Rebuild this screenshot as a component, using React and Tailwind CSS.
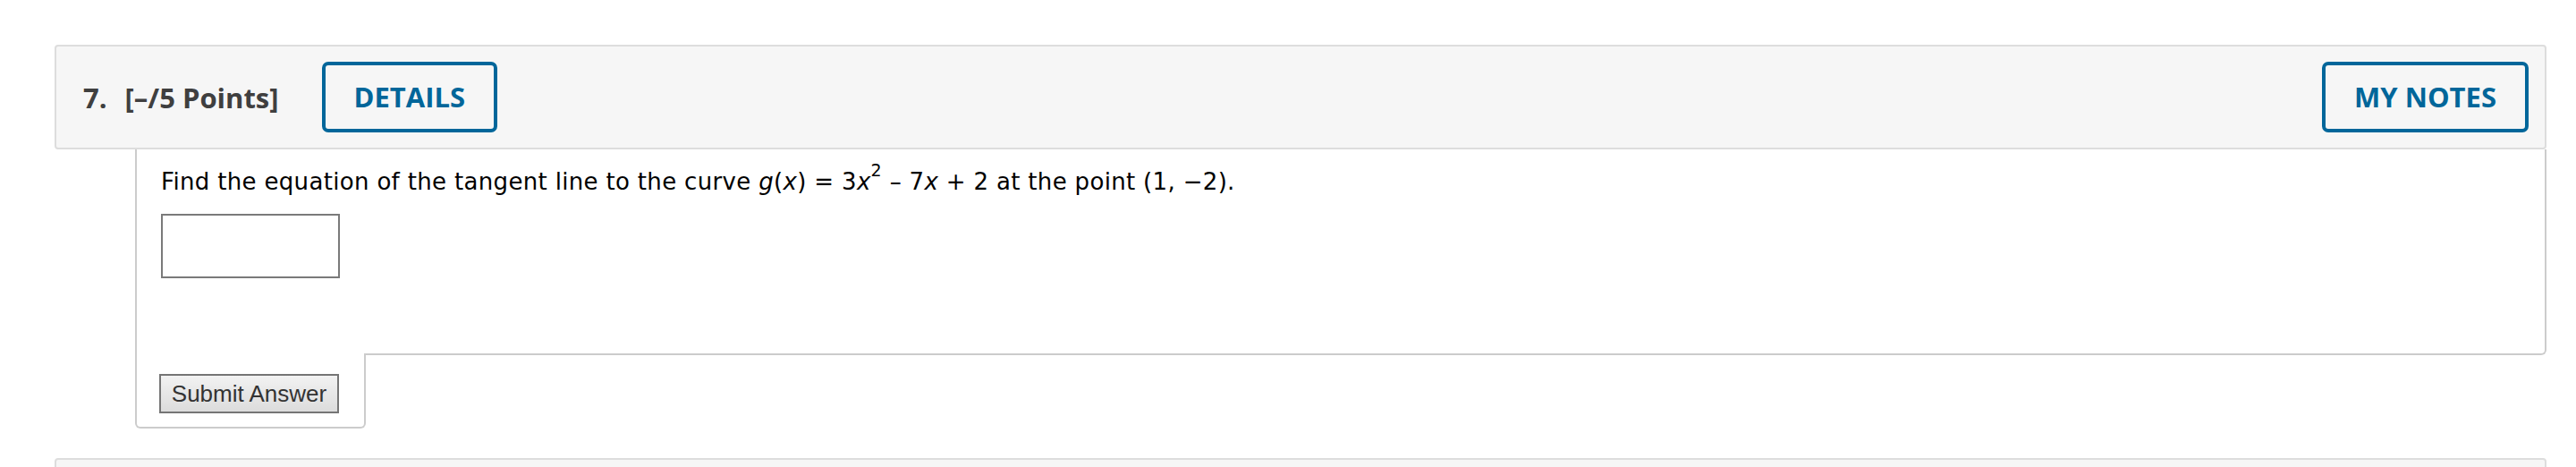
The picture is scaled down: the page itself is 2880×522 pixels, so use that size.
export default function App() {
  return (
    <div className="min-h-screen bg-white pt-[50px] pl-[61px] pr-[33px]">
      <div className="flex h-[117px] items-center justify-between rounded-[4px] border-2 border-[#dddddd] bg-[#f6f6f6] pl-[30px] pr-[18px] font-['Open_Sans',sans-serif]">
        <div className="flex items-center">
          <span className="text-[31px] font-bold leading-[40px] text-[#3f3f3f]">7.</span>
          <span className="ml-[20px] text-[31px] font-bold leading-[40px] text-[#3f3f3f]">[–/5 Points]</span>
          <button className="ml-[48px] flex h-[79px] items-center rounded-[7px] border-4 border-[#00669a] px-[32px] text-[31px] font-bold text-[#00669a]">
            DETAILS
          </button>
        </div>
        <button className="flex h-[79px] items-center rounded-[7px] border-4 border-[#00669a] px-[32px] text-[31px] font-bold text-[#00669a]">
          MY NOTES
        </button>
      </div>
      <div className="ml-[90px]">
        <div className="rounded-br-[6px] border-x-2 border-b-2 border-[#cccccc] bg-white pt-[21px] pb-[84px] pl-[27px]">
          <p className="font-['DejaVu_Sans',sans-serif] text-[26px] leading-[30px] tracking-[0.33px] text-black">
            Find the equation of the tangent line to the curve <i>g</i>(<i>x</i>) = 3<i>x</i>
            <sup className="relative top-[-15px] text-[19px] leading-none">2</sup> – 7<i>x</i> + 2 at the point (1, −2).
          </p>
          <input
            type="text"
            className="mt-[21px] block h-[72px] w-[200px] border-2 border-[#7a7a7a] bg-white"
          />
        </div>
        <div className="relative -mt-[2px] w-[258px] rounded-b-[6px] border-x-2 border-b-2 border-[#cccccc] bg-white pt-[23px] pb-[15px] pl-[25px]">
          <button className="h-[44px] w-[201px] border-2 border-[#757575] bg-linear-to-b from-[#f2f2f2] to-[#dcdcdc] font-['Liberation_Sans',Arial,sans-serif] text-[26px] leading-none text-[#333333]">
            Submit Answer
          </button>
        </div>
      </div>
      <div className="mt-[33px] h-[117px] rounded-t-[4px] border-2 border-[#dddddd] bg-[#f6f6f6]" />
    </div>
  );
}
